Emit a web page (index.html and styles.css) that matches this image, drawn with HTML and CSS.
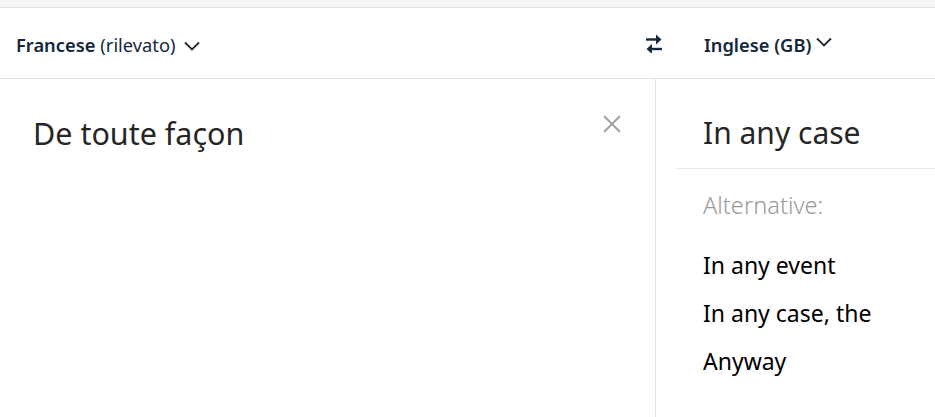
FILE: index.html
```html
<!DOCTYPE html>
<html lang="it">
<head>
    <meta charset="UTF-8">
    <meta name="viewport" content="width=device-width, initial-scale=1.0">
    <title>Traduttore</title>
    <link rel="stylesheet" href="styles.css">
</head>
<body>
    <div class="top-strip"></div>

    <div class="lang-bar">
        <div class="lang-src">
            <span class="lang-name">Francese</span>
            <span class="lang-detected">(rilevato)</span>
            <svg class="chevron" width="16" height="16" viewBox="0 0 16 16">
                <path d="M1 4.5l7 7 7-7" fill="none" stroke="#1e2a36" stroke-width="1.8"/>
            </svg>
        </div>
        <div class="swap">
            <svg width="18" height="20" viewBox="0 0 18 20">
                <path d="M1 6.5h13" stroke="#16283a" stroke-width="2.4" fill="none"/>
                <path d="M11 1.5l5.5 5-5.5 5z" fill="#16283a"/>
                <path d="M4 16h13" stroke="#16283a" stroke-width="2.4" fill="none"/>
                <path d="M7 11l-5.5 5 5.5 5z" fill="#16283a"/>
            </svg>
        </div>
        <div class="lang-tgt">
            <span class="lang-name">Inglese (GB)</span>
            <svg class="chevron" width="16" height="16" viewBox="0 0 16 16">
                <path d="M1 4.5l7 7 7-7" fill="none" stroke="#1e2a36" stroke-width="1.8"/>
            </svg>
        </div>
    </div>

    <div class="panes">
        <div class="pane-src">
            <div class="src-text">De toute façon</div>
            <svg class="clear" width="20" height="20" viewBox="0 0 20 20">
                <path d="M2 2l16 16M18 2L2 18" stroke="#9aa0a6" stroke-width="1.8"/>
            </svg>
        </div>
        <div class="pane-tgt">
            <div class="result">In any case</div>
            <div class="alt-label">Alternative:</div>
            <ul class="alt-list">
                <li>In any event</li>
                <li>In any case, the</li>
                <li>Anyway</li>
            </ul>
        </div>
    </div>
</body>
</html>
```

FILE: styles.css
```css
body {
    font-family: "Noto Sans", "Open Sans", sans-serif;
    margin: 0;
    background-color: #fff;
    color: #1b2733;
    overflow: hidden;
}

.top-strip {
    height: 7px;
    background-color: #f4f4f4;
    border-bottom: 1px solid #e2e2e2;
}

.lang-bar {
    display: flex;
    align-items: center;
    height: 70px;
    border-bottom: 1px solid #dfe4ea;
    font-size: 18.3px;
    color: #14283b;
}

.lang-src {
    width: 622px;
    padding-left: 16px;
    display: flex;
    align-items: center;
    margin-top: 3px;
}

.lang-name {
    font-weight: 600;
}

.lang-detected {
    margin-left: 5px;
}

.chevron {
    margin-left: 9px;
    margin-top: 2px;
}

.lang-tgt .chevron {
    margin-left: 5px;
    margin-top: -4px;
}

.swap {
    width: 32px;
    display: flex;
    justify-content: center;
}

.lang-tgt {
    padding-left: 34px;
    display: flex;
    align-items: center;
    margin-top: 2px;
}

.panes {
    display: grid;
    grid-template-columns: 656px 1fr;
    height: 338px;
}

.pane-src {
    border-right: 1px solid #dfe4ea;
    display: flex;
    justify-content: space-between;
    align-items: flex-start;
    padding: 33px 33px 0 33px;
}

.src-text {
    font-size: 30.5px;
    color: #262626;
}

.clear {
    margin-top: 2px;
}

.pane-tgt {
    padding-left: 21px;
}

.result {
    font-size: 30px;
    color: #262626;
    padding: 33px 0 15px 26px;
    border-bottom: 1px solid #e6e9ec;
}

.alt-label {
    font-size: 23.6px;
    color: #9a9a9a;
    font-weight: 300;
    padding: 20px 0 0 26px;
}

.alt-list {
    list-style: none;
    margin: 20px 0 0;
    padding-left: 26px;
    font-size: 23px;
    color: #000;
}

.alt-list li {
    line-height: 48px;
}
```
